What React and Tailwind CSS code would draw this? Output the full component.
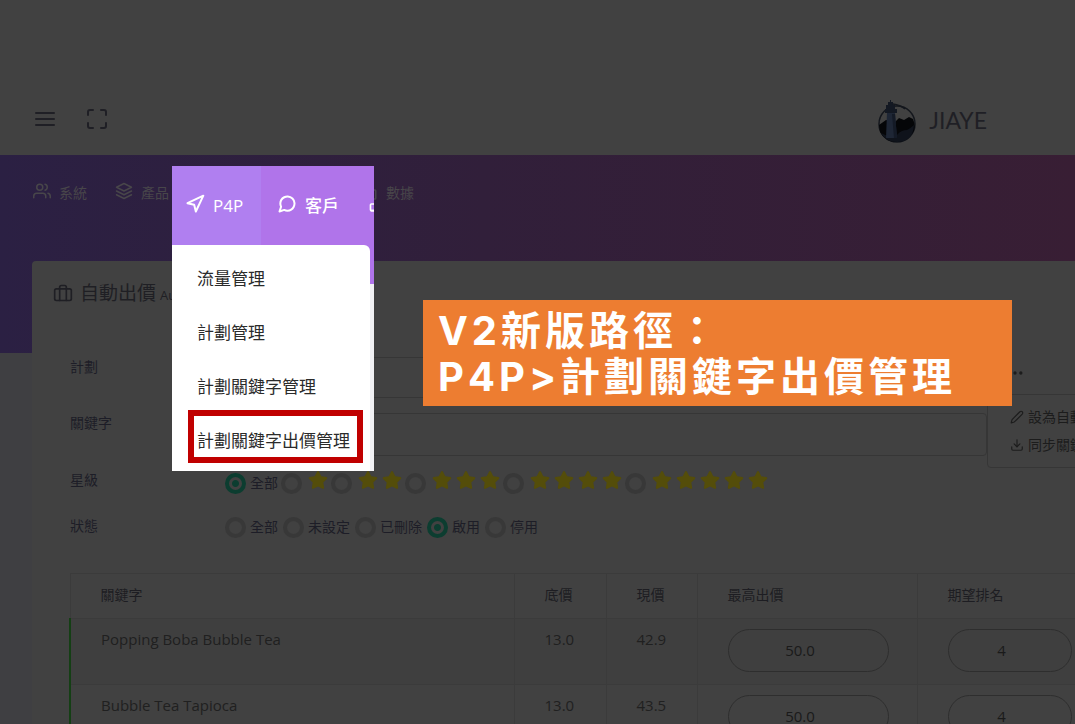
import {
	FiBriefcase,
	FiDownload,
	FiEdit2,
	FiLayers,
	FiMaximize,
	FiMenu,
	FiMessageCircle,
	FiMoreHorizontal,
	FiNavigation,
	FiUsers,
} from "react-icons/fi";
import { FaStar } from "react-icons/fa";
import { TbChartBar } from "react-icons/tb";

const statuses = ["全部", "未設定", "已刪除", "啟用", "停用"];

const keywords = [
	{ name: "Popping Boba Bubble Tea", base: "13.0", current: "42.9", max: "50.0", rank: "4" },
	{ name: "Bubble Tea Tapioca", base: "13.0", current: "43.5", max: "50.0", rank: "4" },
];

const radioClass =
	"size-[21px] shrink-0 appearance-none rounded-full border-4 border-[#383838] checked:border-[#0c3d30] checked:bg-[radial-gradient(circle,#0c3d30_3px,transparent_4px)]";

const Logo = () => (
	<svg viewBox="0 0 40 44" className="h-11 w-10" aria-hidden="true">
		<circle cx="20" cy="24" r="18" fill="none" stroke="#14171d" strokeWidth="1.5" />
		<path d="M2 25 L9 20 L18 22 L22 18 L27 20 L32 17 L36 19 Q40 28 35 34 Q29 42 20 42 Q8 42 3 32 Z" fill="#050608" />
		<path d="M4 33 Q12 38 20 35 Q24 30 30 30 Q34 28 37 25 Q36 42 20 42 Q9 42 4 33 Z" fill="#0f131b" />
		<path d="M10 13 H18 L20 38 H9 Z" fill="#1e2635" />
		<path d="M15 14 H18 L20 38 H17 Z" fill="#141a26" />
		<path d="M8 9 H20 V13 H8 Z M9 5 H18 V9 H9 Z M11 2 H16 V5 H11 Z M13 0 H14 V2 H13 Z" fill="#131822" />
		<path d="M16 4 Q23 5 28 9" fill="none" stroke="#14171d" strokeWidth="1.5" />
	</svg>
);

const StarRadio = ({ count }) => (
	<label className="flex items-center gap-[6px]">
		<input type="radio" name="stars" aria-label={`${count} stars`} className={radioClass} />
		<span className="flex gap-1 pb-1.5">
			{Array.from({ length: count }, (_, i) => (
				<FaStar key={i} className="size-5 text-[#544d0a]" />
			))}
		</span>
	</label>
);

const Header = () => (
	<header className="flex h-[155px] items-end justify-between pr-[88px] pb-[11px] pl-[33px] text-[#1f1f25]">
		<div className="flex gap-7 pb-[13px]">
			<button aria-label="Menu">
				<FiMenu className="size-6" />
			</button>
			<button aria-label="Fullscreen">
				<FiMaximize className="size-6" />
			</button>
		</div>
		<a href="#" className="flex items-center gap-3 font-[Lato] text-[23px] leading-8">
			<Logo />
			<span className="pb-1">JIAYE</span>
		</a>
	</header>
);

const Nav = () => (
	<nav className="flex h-[73px] items-center pt-0.5 pl-[33px] text-sm text-[#48464a]">
		<a href="#" className="flex items-center gap-2">
			<FiUsers className="mb-1 size-[18px]" />
			系統
		</a>
		<a href="#" className="ml-7 flex items-center gap-2">
			<FiLayers className="mb-1 size-[18px]" />
			產品
		</a>
		<a href="#" className="ml-[191px] flex items-center gap-2">
			<TbChartBar className="size-[18px]" />
			數據
		</a>
	</nav>
);

const Filters = () => (
	<form className="grid grid-cols-[155px_minmax(0,1fr)] pl-[38px] text-sm text-[#1d1d27]">
		<label htmlFor="plan" className="leading-5">
			計劃
		</label>
		<select id="plan" className="mb-[15px] h-[41px] w-[762px] appearance-none rounded-sm border border-[#363636]" />
		<label htmlFor="keyword" className="leading-5">
			關鍵字
		</label>
		<input id="keyword" className="h-[43px] w-[762px] rounded-sm border border-[#363636]" />
		<span className="pt-[14px] leading-5">星級</span>
		<div className="flex h-[50px] items-center gap-[3px] pt-1">
			<label className="flex items-center gap-1">
				<input type="radio" name="stars" defaultChecked className={radioClass} />
				全部
			</label>
			{[1, 2, 3, 4, 5].map((n) => (
				<StarRadio key={n} count={n} />
			))}
		</div>
		<span className="pt-[10px] leading-5">狀態</span>
		<div className="flex h-[42px] items-center gap-[5px]">
			{statuses.map((status) => (
				<label key={status} className="flex items-center gap-1">
					<input
						type="radio"
						name="status"
						defaultChecked={status === "啟用"}
						className={radioClass}
					/>
					{status}
				</label>
			))}
		</div>
	</form>
);

const KeywordTable = () => (
	<table className="mt-[25px] ml-[37px] w-[1031px] table-fixed border-collapse border border-[#393939] text-left">
		<colgroup>
			<col className="w-[444px]" />
			<col className="w-[92px]" />
			<col className="w-[91px]" />
			<col className="w-[220px]" />
			<col />
		</colgroup>
		<thead>
			<tr className="h-[45px] text-sm text-[#1d1d22]">
				{["關鍵字", "底價", "現價", "最高出價", "期望排名"].map((title) => (
					<th key={title} className="border border-[#3b3b3b] pb-0.5 pl-[30px] font-normal">
						{title}
					</th>
				))}
			</tr>
		</thead>
		<tbody>
			{keywords.map((row) => (
				<tr key={row.name} className="border-l-2 border-l-[#143f14] align-top text-[15px] leading-5 text-[#202020] odd:bg-[#3f3f3f]">
					<td className="border-r border-b border-[#3b3b3b] pt-[10px] pl-[30px]">{row.name}</td>
					<td className="border-r border-b border-[#3b3b3b] pt-[10px] pl-[30px]">{row.base}</td>
					<td className="border-r border-b border-[#3b3b3b] pt-[10px] pl-[30px]">{row.current}</td>
					<td className="border-r border-b border-[#3b3b3b] pt-[10px] pr-7 pb-3 pl-[30px]">
						<input
							aria-label="最高出價"
							defaultValue={row.max}
							className="block h-[43px] w-full rounded-full border border-[#2e2e2e] pr-4 pb-0.5 text-center text-[#1a1a1a]"
						/>
					</td>
					<td className="border-r border-b border-[#3b3b3b] pt-[10px] pb-3 pl-[30px]">
						<input
							aria-label="期望排名"
							defaultValue={row.rank}
							className="block h-[43px] w-[124px] rounded-full border border-[#2e2e2e] pr-4 pb-0.5 text-center text-[#1a1a1a]"
						/>
					</td>
				</tr>
			))}
		</tbody>
	</table>
);

const ActionMenu = () => (
	<div className="absolute top-[96px] left-[955px] text-sm whitespace-nowrap text-[#1c1c1c]">
		<button aria-label="More" className="ml-[18px] block h-[37px] pb-1.5">
			<FiMoreHorizontal className="size-5" />
		</button>
		<ul className="w-44 space-y-2 rounded-sm border border-[#363636] bg-[#414141] py-3 pl-[22px] leading-5">
			<li>
				<a href="#" className="flex items-center gap-1">
					<FiEdit2 className="size-[14px]" />
					設為自動出價
				</a>
			</li>
			<li>
				<a href="#" className="flex items-center gap-1">
					<FiDownload className="size-[14px]" />
					同步關鍵字
				</a>
			</li>
		</ul>
	</div>
);

// Lit part of the navigation with the P4P menu open
const Spotlight = () => (
	<section className="absolute top-[166px] left-[172px] h-[305px] w-[202px] overflow-hidden bg-[linear-gradient(#b074ea_118px,#f1f1f4_118px)]">
		<div className="flex h-[79px] w-max text-[17px] text-white">
			<a href="#" className="flex w-[89px] items-center gap-2 bg-[#b07ff0] pl-[13px] font-medium">
				<FiNavigation className="mb-1 size-5" strokeWidth={2.4} />
				P4P
			</a>
			<a href="#" className="flex w-[107px] items-center gap-2 pl-4 font-medium">
				<FiMessageCircle className="mb-1 size-5" strokeWidth={2.4} />
				客戶
			</a>
			<TbChartBar className="mt-[28px] size-5" />
		</div>
		<ul className="h-[226px] w-[198px] rounded-tr-md bg-white pt-[3px] pl-4 text-[17px] text-[#2b2b2b]">
			{["流量管理", "計劃管理", "計劃關鍵字管理"].map((item) => (
				<li key={item} className="flex h-[54px] items-center pt-2 pl-[9px]">
					<a href="#">{item}</a>
				</li>
			))}
			<li className="flex h-[53px] w-[175px] items-center border-6 border-[#c00000] pt-2 pl-[3px] whitespace-nowrap">
				<a href="#">計劃關鍵字出價管理</a>
			</li>
		</ul>
	</section>
);

const App = () => {
	return (
		<div className="relative h-screen overflow-hidden bg-[#414141] font-['Open_Sans','Noto_Sans_CJK_TC',sans-serif]">
			<Header />
			<main className="bg-[#3f3f42] bg-[linear-gradient(90deg,#2b2043,#311f3a_45%,#381e34)] bg-[length:100%_198px] bg-no-repeat">
				<Nav />
				<section className="relative mt-[33px] ml-8 min-h-[500px] rounded-tl bg-[#414141]">
					<h1 className="flex h-12 items-baseline pt-4 pl-[21px] text-[19px] leading-8 text-[#1f1f24]">
						<FiBriefcase className="mr-[7px] size-5 self-center" />
						自動出價
						<small className="ml-1 text-[13px]">Auto</small>
					</h1>
					<div className="pt-12">
						<Filters />
					</div>
					<KeywordTable />
					<ActionMenu />
				</section>
			</main>
			<Spotlight />
			<div className="absolute top-[300px] left-[423px] h-[106px] w-[589px] bg-[#ed7d31] px-[15px] pt-2 font-['Inter','Noto_Sans_CJK_TC',sans-serif] text-[40px] leading-[46px] font-bold tracking-widest whitespace-nowrap text-white">
				<p>V2新版路徑：</p>
				<p>P4P&gt;計劃關鍵字出價管理</p>
			</div>
		</div>
	);
};

export default App;
